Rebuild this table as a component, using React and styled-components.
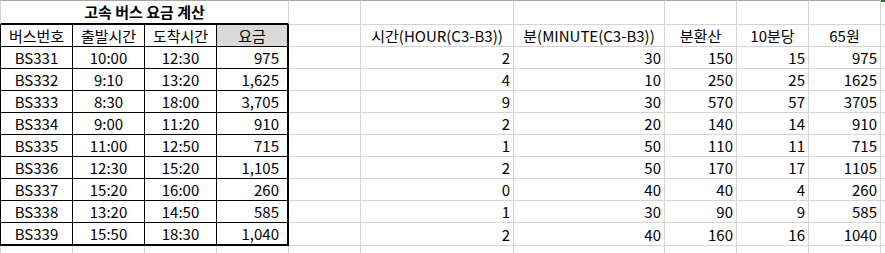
import styled, { createGlobalStyle } from "styled-components";

const GlobalStyle = createGlobalStyle`
  html, body {
    margin: 0;
    padding: 0;
    background: #ffffff;
    overflow: hidden;
  }
`;

const GRID = "#d4d4d4";
const INK = "#000000";

const Sheet = styled.div`
  display: grid;
  grid-template-columns: 73px 72px 72px 72px 72px 153px 151px 72px 72px 72px 1fr;
  grid-template-rows: 25px repeat(9, 22px) 23px 22px;
  width: 885px;
  height: 253px;
  overflow: hidden;
  font-family: "Noto Sans CJK KR", "Noto Sans", sans-serif;
  font-size: 15px;
  color: ${INK};
`;

// plain gridline cell, used everywhere outside the table
const Cell = styled.div`
  box-sizing: border-box;
  display: flex;
  align-items: flex-end;
  justify-content: ${(p) =>
    p.$align === "right" ? "flex-end" : p.$align === "left" ? "flex-start" : "center"};
  padding: 0 ${(p) => p.$padRight || 3}px 3px 3px;
  line-height: 15px;
  white-space: nowrap;
  overflow: hidden;
  border-right: 1px solid ${GRID};
  border-bottom: ${(p) => (p.$last ? "1px" : "1px")} solid ${GRID};
  border-top: ${(p) => (p.$top ? `1px solid ${p.$top}` : "none")};
  border-left: ${(p) => (p.$left ? `1px solid ${p.$left}` : "none")};
`;

const TitleCell = styled(Cell)`
  grid-column: span 4;
  font-weight: 700;
  border-bottom: 2px solid ${INK};
  border-left: 1px solid ${GRID};
  padding-bottom: 4px;
`;

// cells inside the bordered fare table
const TableCell = styled(Cell)`
  border-right: ${(p) => (p.$edge ? `2px solid ${INK}` : `1px solid ${INK}`)};
  border-bottom: ${(p) => (p.$bottom ? `2px solid ${INK}` : `1px solid ${INK}`)};
  border-left: ${(p) => (p.$first ? `1px solid ${INK}` : "none")};
  background: ${(p) => (p.$fill ? "#d9d9d9" : "transparent")};
`;

const heads = ["버스번호", "출발시간", "도착시간", "요금"];

const buses = [
  ["BS331", "10:00", "12:30", "975"],
  ["BS332", "9:10", "13:20", "1,625"],
  ["BS333", "8:30", "18:00", "3,705"],
  ["BS334", "9:00", "11:20", "910"],
  ["BS335", "11:00", "12:50", "715"],
  ["BS336", "12:30", "15:20", "1,105"],
  ["BS337", "15:20", "16:00", "260"],
  ["BS338", "13:20", "14:50", "585"],
  ["BS339", "15:50", "18:30", "1,040"],
];

const calcHeads = ["시간(HOUR(C3-B3))", "분(MINUTE(C3-B3))", "분환산", "10분당", "65원"];

const calc = [
  [2, 30, 150, 15, 975],
  [4, 10, 250, 25, 1625],
  [9, 30, 570, 57, 3705],
  [2, 20, 140, 14, 910],
  [1, 50, 110, 11, 715],
  [2, 50, 170, 17, 1105],
  [0, 40, 40, 4, 260],
  [1, 30, 90, 9, 585],
  [2, 40, 160, 16, 1040],
];

const App = () => {
  return (
    <>
      <GlobalStyle />
      <Sheet>
        {/* row 1 */}
        <TitleCell $top="#a6a6a6">고속 버스 요금 계산</TitleCell>
        {[0, 1, 2, 3, 4, 5].map((i) => (
          <Cell key={`t${i}`} $top="#a6a6a6" />
        ))}
        <Cell $top="#217346" style={{ borderTopWidth: 2 }} />

        {/* row 2 */}
        {heads.map((h, i) => (
          <TableCell key={h} $first={i === 0} $edge={i === 3} $fill={i === 3}>
            {h}
          </TableCell>
        ))}
        <Cell />
        {calcHeads.map((h) => (
          <Cell key={h}>{h}</Cell>
        ))}
        <Cell />

        {/* data rows */}
        {buses.map((row, r) => {
          const last = r === buses.length - 1;
          return [
            ...row.map((v, i) => (
              <TableCell
                key={`b${r}-${i}`}
                $first={i === 0}
                $edge={i === 3}
                $bottom={last}
                $align={i === 3 ? "right" : "center"}
                $padRight={i === 3 ? 8 : 3}
              >
                {v}
              </TableCell>
            )),
            <Cell key={`e${r}`} />,
            ...calc[r].map((v, i) => (
              <Cell key={`c${r}-${i}`} $align="right">
                {v}
              </Cell>
            )),
            <Cell key={`k${r}`} />,
          ];
        })}

        {/* empty row below */}
        {Array.from({ length: 11 }).map((_, i) => (
          <Cell key={`z${i}`} $left={i === 0 ? GRID : undefined} />
        ))}
      </Sheet>
    </>
  );
};

export default App;
